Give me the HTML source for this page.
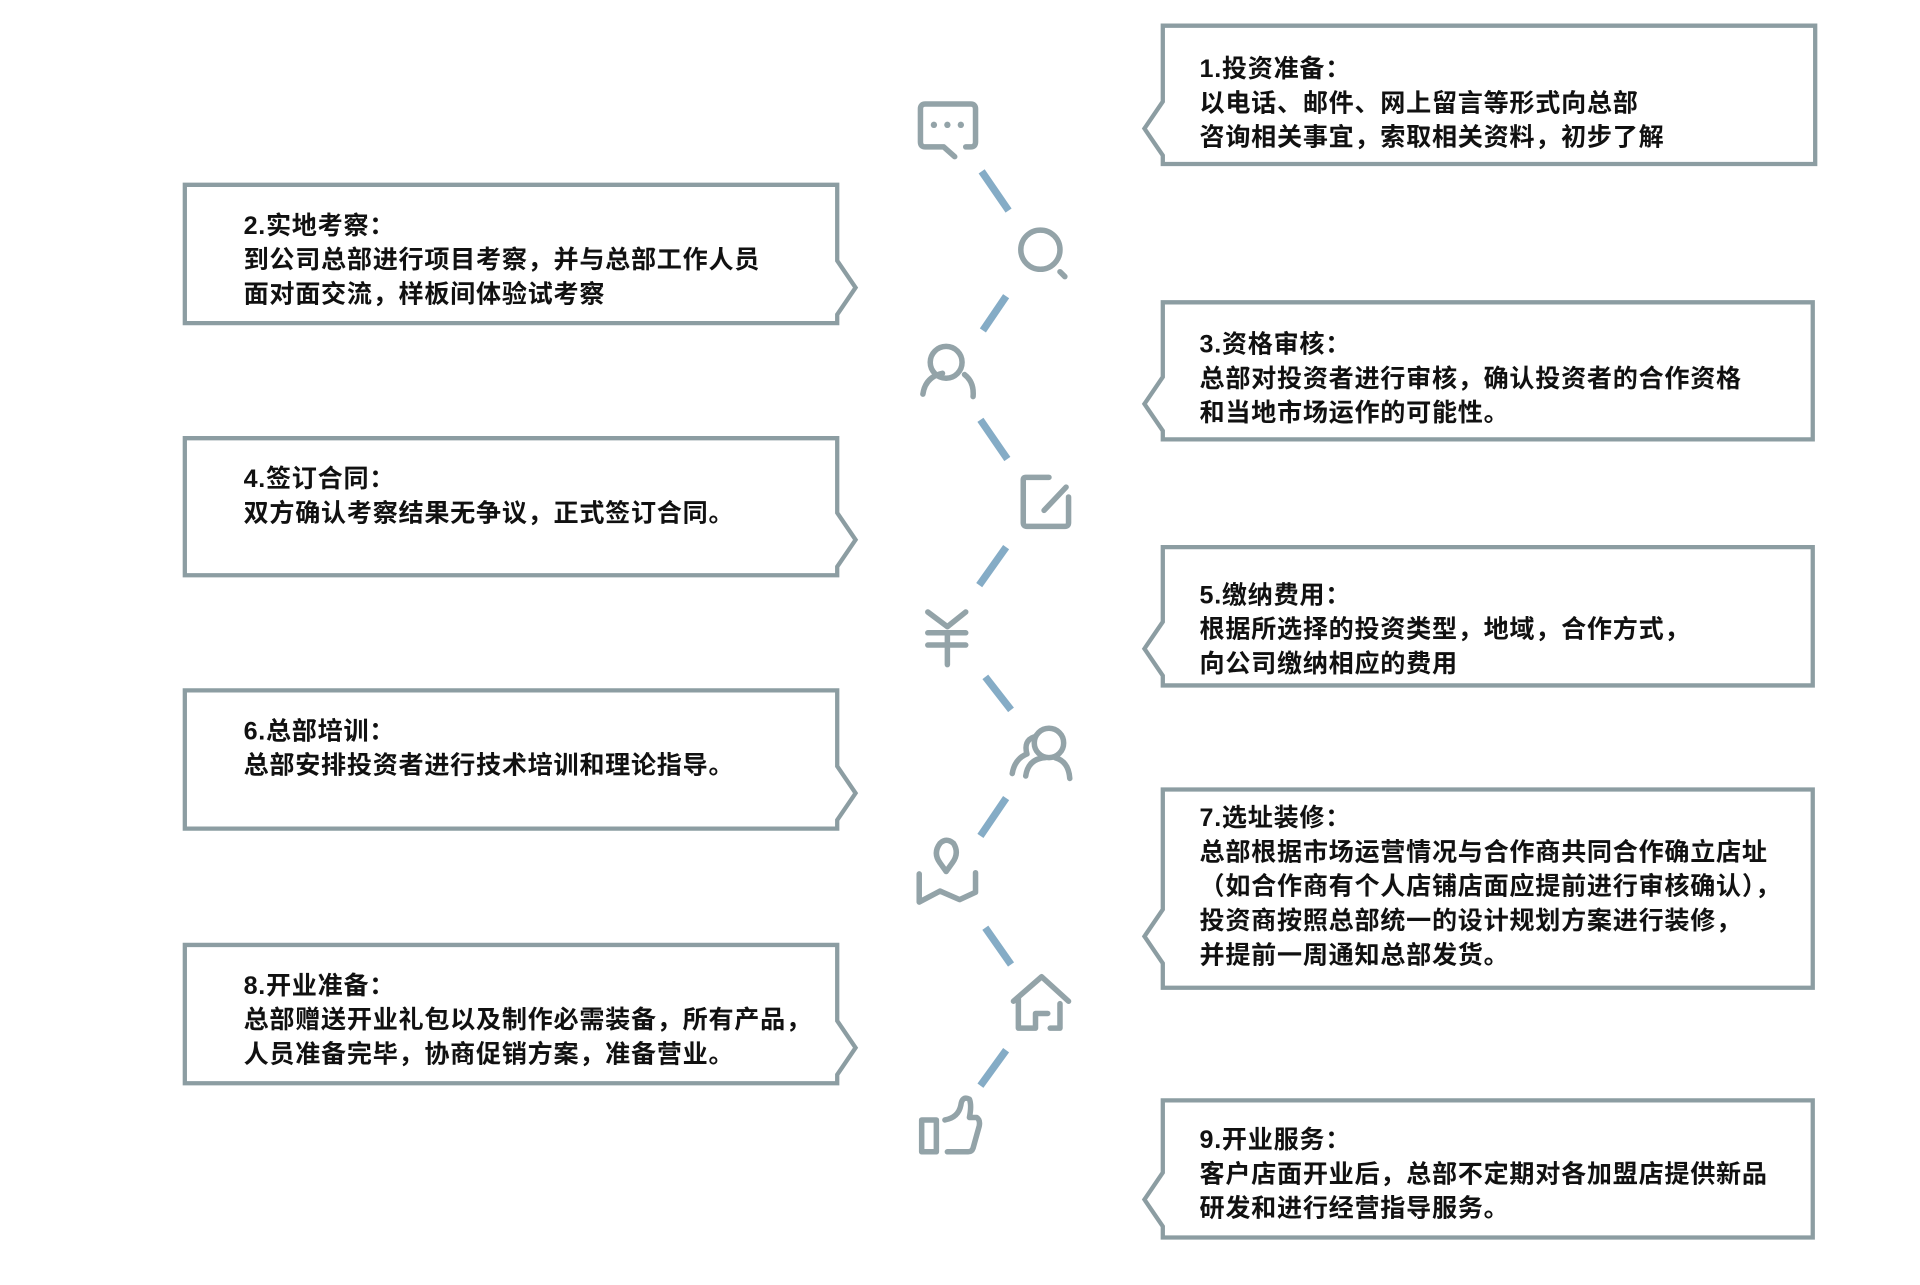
<!DOCTYPE html>
<html><head><meta charset="utf-8">
<style>
html,body{margin:0;padding:0;background:#fff;width:1920px;height:1280px;overflow:hidden}
#w{position:absolute;left:0;top:0;width:1570px;height:1050px;transform:scale(1.224);transform-origin:0 0}
svg{position:absolute;left:0;top:0}
.t{position:absolute;font-family:"Liberation Sans","Noto Sans CJK SC",sans-serif;font-size:20.5px;line-height:28px;color:#111;white-space:nowrap;font-weight:bold;letter-spacing:0.6px}
</style></head><body><div id="w">
<svg width="1570" height="1050" viewBox="0 0 1570 1050">
<g fill="#fff" stroke="#8c9da2" stroke-width="3.5" stroke-linejoin="miter">
<path d="M950,21 H1483 V134 H950 V127 L935,105 L950,83 Z"/>
<path d="M950,247 H1481 V359 H950 V352 L935,330 L950,308 Z"/>
<path d="M950,447 H1481 V560 H950 V552 L935,530 L950,508 Z"/>
<path d="M950,645 H1481 V807 H950 V787 L935,765 L950,743 Z"/>
<path d="M950,899 H1481 V1011 H950 V1002 L935,980 L950,958 Z"/>
<path d="M151,151 H684 V213 L699,235 L684,257 V264 H151 Z"/>
<path d="M151,358 H684 V419 L699,441 L684,463 V470 H151 Z"/>
<path d="M151,564 H684 V626 L699,648 L684,670 V677 H151 Z"/>
<path d="M151,772 H684 V834 L699,856 L684,878 V885 H151 Z"/>
</g>
<g stroke="#85acc6" stroke-width="6" stroke-linecap="butt">
<line x1="802" y1="140" x2="824" y2="172"/>
<line x1="822" y1="242" x2="803" y2="270"/>
<line x1="801" y1="343" x2="823" y2="375"/>
<line x1="822" y1="447" x2="800" y2="478"/>
<line x1="805" y1="553" x2="826" y2="580"/>
<line x1="822" y1="652" x2="801" y2="683"/>
<line x1="805" y1="758" x2="826" y2="788"/>
<line x1="822" y1="858" x2="801" y2="887"/>
</g>
<g fill="none" stroke="#93a3a8" stroke-width="4.5" stroke-linecap="round" stroke-linejoin="round">
<path d="M771,120 H756 Q752,120 752,116 V89 Q752,85 756,85 H793 Q797,85 797,89 V116 Q797,120 793,120 H789 M771,120 L780,128"/>
<circle cx="763" cy="102" r="2.6" fill="#93a3a8" stroke="none"/><circle cx="774" cy="102" r="2.6" fill="#93a3a8" stroke="none"/><circle cx="785" cy="102" r="2.6" fill="#93a3a8" stroke="none"/>
<circle cx="850" cy="204" r="16"/><path d="M866,222 L870,226"/>
<circle cx="773" cy="296" r="13"/><path d="M754,322 Q756,308 770,305 M788,306 Q796,312 795,324"/>
<path d="M857,390 H838 Q836,390 836,392 V427 Q836,430 839,430 H870 Q873,430 873,427 V406 M853,417 L871,398"/>
<path d="M758,500 L774,512 L789,500 M758,517 H789 M758,527 H789 M774,517 V543"/>
<circle cx="857" cy="607" r="12"/><path d="M838,634 Q840,620 854,619 M862,619 Q873,622 874,636 M845,602 Q836,605 839,616 Q829,620 827,632"/>
<path d="M751,714 V737 L768,728 L784,735 L797,729 V713 M773,712 L768,705 Q762,697 768,689 Q773,684 779,689 Q784,697 778,705 Z"/>
<path d="M828,818 L851,798 L873,818 M832,815 V840 H846 V828 H856 M866,820 V840 H858"/>
<path d="M753,915 V941 H765 V915 Z M772,915 Q783,913 785,903 Q786,895 792,898 Q794,903 792,913 H798 Q801,915 800,920 L795,938 Q794,941 791,941 H774"/>
</g>
</svg>
<div class="t" style="left:980px;top:43px">1.投资准备：<br>以电话、邮件、网上留言等形式向总部<br>咨询相关事宜，索取相关资料，初步了解</div>
<div class="t" style="left:980px;top:268px">3.资格审核：<br>总部对投资者进行审核，确认投资者的合作资格<br>和当地市场运作的可能性。</div>
<div class="t" style="left:980px;top:473px">5.缴纳费用：<br>根据所选择的投资类型，地域，合作方式，<br>向公司缴纳相应的费用</div>
<div class="t" style="left:980px;top:655px">7.选址装修：<br>总部根据市场运营情况与合作商共同合作确立店址<br>（如合作商有个人店铺店面应提前进行审核确认），<br>投资商按照总部统一的设计规划方案进行装修，<br>并提前一周通知总部发货。</div>
<div class="t" style="left:980px;top:918px">9.开业服务：<br>客户店面开业后，总部不定期对各加盟店提供新品<br>研发和进行经营指导服务。</div>
<div class="t" style="left:199px;top:171px">2.实地考察：<br>到公司总部进行项目考察，并与总部工作人员<br>面对面交流，样板间体验试考察</div>
<div class="t" style="left:199px;top:378px">4.签订合同：<br>双方确认考察结果无争议，正式签订合同。</div>
<div class="t" style="left:199px;top:584px">6.总部培训：<br>总部安排投资者进行技术培训和理论指导。</div>
<div class="t" style="left:199px;top:792px">8.开业准备：<br>总部赠送开业礼包以及制作必需装备，所有产品，<br>人员准备完毕，协商促销方案，准备营业。</div>
</div></body></html>
